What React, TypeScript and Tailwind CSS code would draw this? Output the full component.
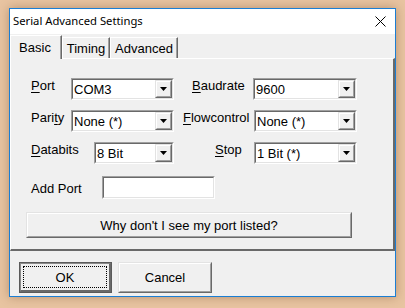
import React from "react";

const Arrow = () => (
  <svg width="7" height="4" viewBox="0 0 7 4" className="block">
    <polygon points="0,0 7,0 3.5,4" fill="#000" />
  </svg>
);

function Combo({ value, width }: { value: string; width: number }) {
  return (
    <div
      className="h-[22px] border-t border-l border-t-[#a0a0a0] border-l-[#a0a0a0] border-b border-r border-b-white border-r-white shrink-0"
      style={{ width }}
    >
      <div className="h-full border-t border-l border-t-[#696969] border-l-[#696969] border-b border-r border-b-[#e3e3e3] border-r-[#e3e3e3] bg-white flex items-stretch">
        <div className="flex-1 flex items-center pl-[1px] text-[13px] leading-none text-black">{value}</div>
        <div className="w-[17px] border-t border-l border-t-[#e3e3e3] border-l-[#e3e3e3] border-b border-r border-b-[#696969] border-r-[#696969]">
          <div className="h-full border-t border-l border-t-white border-l-white border-b border-r border-b-[#a0a0a0] border-r-[#a0a0a0] bg-[#f0f0f0] flex items-center justify-center">
            <Arrow />
          </div>
        </div>
      </div>
    </div>
  );
}

function Label({ children, width, pl = 0 }: { children: React.ReactNode; width: number; pl?: number }) {
  return (
    <div className="shrink-0 text-[13px] leading-[16px] text-black" style={{ width, paddingLeft: pl }}>
      {children}
    </div>
  );
}

const U = ({ c }: { c: string }) => <span className="underline underline-offset-[2px] decoration-1">{c}</span>;

export default function App() {
  return (
    <div
      className="w-[405px] h-[308px] bg-[#e8c4a1] pt-[8px] pl-[9px] overflow-hidden"
      style={{ fontFamily: '"Liberation Sans", Arial, sans-serif' }}
    >
      <div className="w-[387px] h-[289px] border border-[#1b7ed3] bg-[#f0f0f0] shadow-[0_0_10px_rgba(90,50,20,0.35)] flex flex-col">
        {/* Title bar */}
        <div className="h-[25px] bg-white flex items-center justify-between shrink-0">
          <span className="pl-[3px] text-[11.25px] text-black" style={{ fontFamily: '"Noto Sans", sans-serif' }}>
            Serial Advanced Settings
          </span>
          <svg width="11" height="11" viewBox="0 0 11 11" className="mr-[9px]">
            <path d="M0.5 0.5 L10.5 10.5 M10.5 0.5 L0.5 10.5" stroke="#000" strokeWidth="1" />
          </svg>
        </div>
        {/* Tabs */}
        <div className="h-[24px] flex items-end shrink-0 relative z-10">
          <div className="w-[52px] h-[24px] mb-[-1px] bg-[#f0f0f0] border-t border-l border-t-white border-l-white border-r border-r-[#696969] shadow-[inset_-1px_0_0_#a0a0a0] flex items-center justify-center text-[13px] leading-none text-black pr-[2px]">
            Basic
          </div>
          <div className="w-[48px] h-[21px] border-t border-l border-t-white border-l-white border-r border-r-[#696969] shadow-[inset_-1px_0_0_#a0a0a0] flex items-center justify-center text-[13px] leading-none text-black">
            Timing
          </div>
          <div className="w-[68px] h-[21px] border-t border-l border-t-white border-l-white border-r border-r-[#696969] shadow-[inset_-1px_0_0_#a0a0a0] flex items-center justify-center text-[13px] leading-none text-black">
            Advanced
          </div>
        </div>
        {/* Panel */}
        <div className="h-[193px] shrink-0 border-t border-l border-t-white border-l-white border-r-2 border-b-2 border-r-[#696969] border-b-[#696969] flex flex-col pt-[19px]">
          <div className="flex items-start pl-[20px] h-[22px]">
            <Label width={40}><U c="P" />ort</Label>
            <Combo value="COM3" width={103} />
            <Label width={79} pl={18}><U c="B" />audrate</Label>
            <Combo value="9600" width={104} />
          </div>
          <div className="flex items-start pl-[20px] h-[22px] mt-[10px]">
            <Label width={40}>Pari<U c="t" />y</Label>
            <Combo value="None (*)" width={103} />
            <Label width={80} pl={9}><U c="F" />lowcontrol</Label>
            <Combo value="None (*)" width={103} />
          </div>
          <div className="flex items-start pl-[20px] h-[22px] mt-[10px]">
            <Label width={63}><U c="D" />atabits</Label>
            <Combo value="8 Bit" width={80} />
            <Label width={80} pl={41}><U c="S" />top</Label>
            <Combo value="1 Bit (*)" width={103} />
          </div>
          <div className="flex items-center pl-[20px] h-[23px] mt-[12px]">
            <div className="w-[71px] shrink-0 text-[13px] leading-[16px] text-black pt-[3px]">Add Port</div>
            <div className="w-[113px] h-[23px] border-t border-l border-t-[#a0a0a0] border-l-[#a0a0a0] border-b border-r border-b-white border-r-white">
              <div className="h-full border-t border-l border-t-[#696969] border-l-[#696969] border-b border-r border-b-[#e3e3e3] border-r-[#e3e3e3] bg-white" />
            </div>
          </div>
          <div className="ml-[15px] mt-[13px] w-[326px] h-[26px] border-t border-l border-t-[#e3e3e3] border-l-[#e3e3e3] border-b border-r border-b-[#696969] border-r-[#696969]">
            <div className="h-full border-t border-l border-t-white border-l-white border-b border-r border-b-[#a0a0a0] border-r-[#a0a0a0] flex items-center justify-center text-[13px] leading-none text-black">
              Why don't I see my port listed?
            </div>
          </div>
        </div>
        {/* Bottom buttons */}
        <div className="flex pl-[9px] pt-[11px] gap-[6px]">
          <div className="w-[93px] h-[31px] border border-[#5a5a5a]">
            <div className="h-full border-t border-l border-t-[#8a8a8a] border-l-[#8a8a8a] border-b-2 border-r-2 border-b-[#696969] border-r-[#696969] p-[2px]">
              <div className="h-full border border-dotted border-black flex items-center justify-center text-[13px] leading-none text-black">
                OK
              </div>
            </div>
          </div>
          <div className="w-[94px] h-[31px] border-t border-l border-t-[#e3e3e3] border-l-[#e3e3e3] border-b border-r border-b-[#696969] border-r-[#696969]">
            <div className="h-full border-t border-l border-t-white border-l-white border-b border-r border-b-[#a0a0a0] border-r-[#a0a0a0] flex items-center justify-center text-[13px] leading-none text-black">
              Cancel
            </div>
          </div>
        </div>
      </div>
    </div>
  );
}
